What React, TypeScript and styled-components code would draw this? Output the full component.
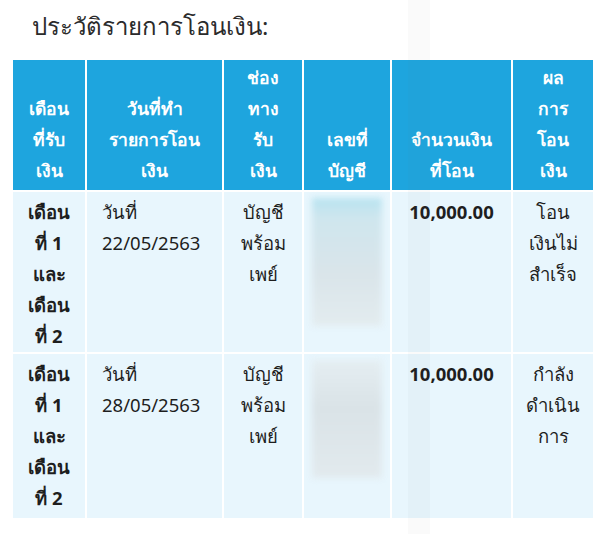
import React from "react";
import styled, { createGlobalStyle } from "styled-components";

const Global = createGlobalStyle`
  html, body { margin: 0; padding: 0; background: #ffffff; }
  body { font-family: "Noto Sans", "DejaVu Sans", sans-serif; }
`;

const Page = styled.div`
  position: relative;
  width: 607px;
  height: 534px;
  overflow: hidden;
  padding: 8px 14px 0 13px;
  box-sizing: border-box;
`;

const Title = styled.h2`
  margin: 0 0 0 19px;
  font-size: 24px;
  font-weight: 400;
  line-height: 36px;
  color: #2b2b2b;
`;

const Grid = styled.div`
  margin-top: 16px;
  display: grid;
  grid-template-columns: 72px 135px 78px 86px 119px 80px;
  grid-template-rows: 130px 160px 164px;
  gap: 2px;
  background: #ffffff;
  width: 580px;
`;

const HeadCell = styled.div`
  background: #1ea5de;
  color: #ffffff;
  font-size: 17.5px;
  font-weight: 600;
  line-height: 31px;
  text-align: center;
  display: flex;
  flex-direction: column;
  justify-content: flex-end;
  padding: 0 2px 4px;
`;

const Cell = styled.div<{ $align?: string; $bold?: boolean }>`
  background: #e8f6fd;
  color: #1e1e1e;
  font-size: 18.5px;
  font-weight: ${(p) => (p.$bold ? 700 : 400)};
  line-height: 31px;
  text-align: ${(p) => p.$align || "center"};
  padding: ${(p) => (p.$align === "left" ? "4px 2px 0 15px" : "4px 2px 0")};
  position: relative;
  white-space: nowrap;
`;

const Blur = styled.div<{ $tint?: boolean; $h: number }>`
  position: absolute;
  left: 8px;
  top: 6px;
  width: 70px;
  height: ${(p) => p.$h}px;
  background: ${(p) =>
    p.$tint
      ? "linear-gradient(180deg, #b7e3f0 0px, #cfe6ee 20px, #dae5ea 60%, #e3ecef 100%)"
      : "linear-gradient(180deg, #e5eef2 0px, #dae3e7 40%, #e2eaee 100%)"};
  filter: blur(3px);
`;

const Strip = styled.div`
  position: absolute;
  left: 408px;
  top: 0;
  width: 22px;
  height: 534px;
  background: rgba(120, 120, 120, 0.035);
  pointer-events: none;
`;

const Line = styled.span`
  display: block;
`;

const L = ({ t }: { t: string[] }) => (
  <>
    {t.map((s, i) => (
      <Line key={i}>{s}</Line>
    ))}
  </>
);

const rows = [
  { date: "22/05/2563", status: ["โอน", "เงินไม่", "สำเร็จ"], tint: true, h: 128 },
  { date: "28/05/2563", status: ["กำลัง", "ดำเนิน", "การ"], tint: false, h: 118 },
];

export default function App() {
  return (
    <Page>
      <Global />
      <Title>ประวัติรายการโอนเงิน:</Title>
      <Grid>
        <HeadCell><L t={["เดือน", "ที่รับ", "เงิน"]} /></HeadCell>
        <HeadCell><L t={["วันที่ทำ", "รายการโอน", "เงิน"]} /></HeadCell>
        <HeadCell><L t={["ช่อง", "ทาง", "รับ", "เงิน"]} /></HeadCell>
        <HeadCell><L t={["เลขที่", "บัญชี"]} /></HeadCell>
        <HeadCell><L t={["จำนวนเงิน", "ที่โอน"]} /></HeadCell>
        <HeadCell><L t={["ผล", "การ", "โอน", "เงิน"]} /></HeadCell>
        {rows.map((r, i) => (
          <React.Fragment key={i}>
            <Cell $bold><L t={["เดือน", "ที่ 1", "และ", "เดือน", "ที่ 2"]} /></Cell>
            <Cell $align="left"><L t={["วันที่", r.date]} /></Cell>
            <Cell><L t={["บัญชี", "พร้อม", "เพย์"]} /></Cell>
            <Cell><Blur $tint={r.tint} $h={r.h} /></Cell>
            <Cell $bold>10,000.00</Cell>
            <Cell><L t={r.status} /></Cell>
          </React.Fragment>
        ))}
      </Grid>
      <Strip />
    </Page>
  );
}
